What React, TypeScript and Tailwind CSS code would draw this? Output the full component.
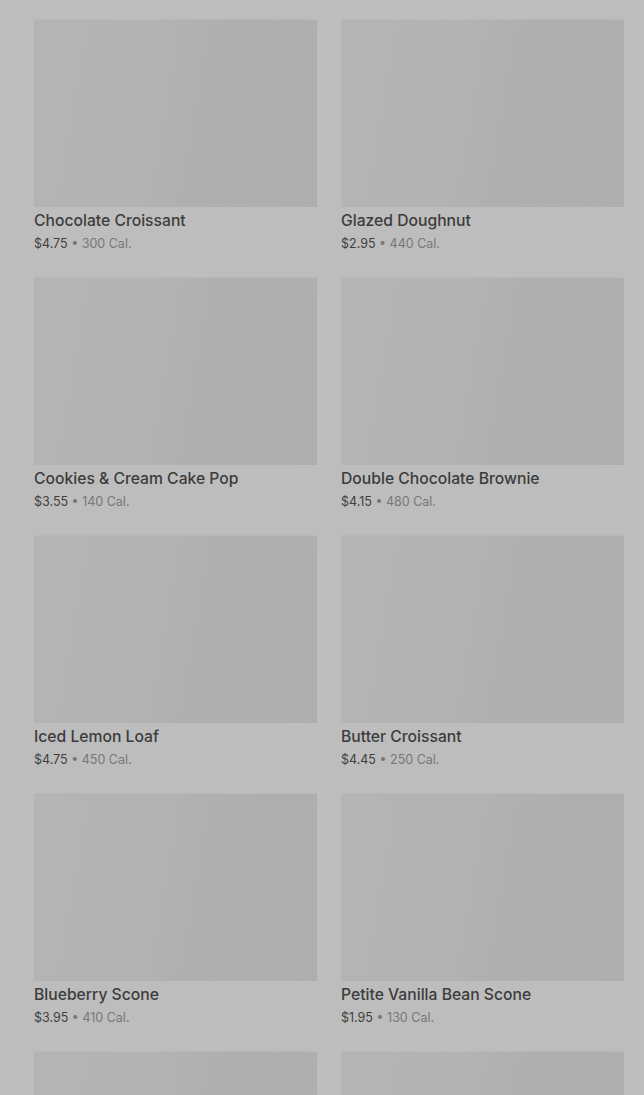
import React from "react";

const items = [
  { name: "Chocolate Croissant", price: "$4.75", cal: "300 Cal." },
  { name: "Glazed Doughnut", price: "$2.95", cal: "440 Cal." },
  { name: "Cookies & Cream Cake Pop", price: "$3.55", cal: "140 Cal." },
  { name: "Double Chocolate Brownie", price: "$4.15", cal: "480 Cal." },
  { name: "Iced Lemon Loaf", price: "$4.75", cal: "450 Cal." },
  { name: "Butter Croissant", price: "$4.45", cal: "250 Cal." },
  { name: "Blueberry Scone", price: "$3.95", cal: "410 Cal." },
  { name: "Petite Vanilla Bean Scone", price: "$1.95", cal: "130 Cal." },
  { name: "", price: "", cal: "" },
  { name: "", price: "", cal: "" },
];

export default function App() {
  return (
    <div
      className="w-[644px] h-[1095px] overflow-hidden bg-[#bdbdbd]"
      style={{ fontFamily: "Inter, 'Liberation Sans', sans-serif" }}
    >
      <div className="grid grid-cols-[283px_283px] gap-x-[24px] gap-y-[24px] pl-[34px] pt-[19px]">
        {items.map((it, i) => (
          <div key={i} className="flex flex-col">
            <div className="h-[188px] bg-[linear-gradient(100deg,#b4b4b4_0%,#b3b3b3_40%,#afafaf_60%,#aeaeae_100%)] border-t border-[#b8b8b8]" />
            {it.name ? (
              <>
                <div className="h-[27px] pt-[2px] text-[15.7px] leading-[24px] font-medium text-[#3c3c3c]">
                  {it.name}
                </div>
                <div className="h-[19px] text-[12.5px] leading-[20px]">
                  <span className="text-[#3f3f3f]">{it.price}</span>
                  <span className="text-[#777777]"> • {it.cal}</span>
                </div>
              </>
            ) : (
              <div className="h-[46px]" />
            )}
          </div>
        ))}
      </div>
    </div>
  );
}
